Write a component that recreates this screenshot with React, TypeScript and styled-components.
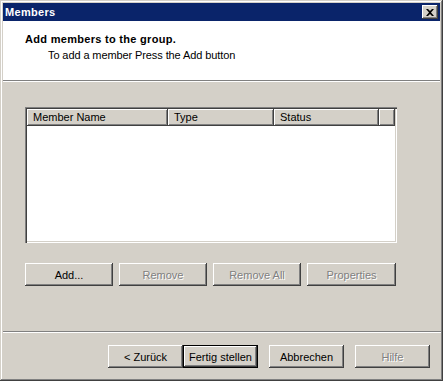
import React from "react";
import styled, { createGlobalStyle, css } from "styled-components";

const Global = createGlobalStyle`
  html, body { margin: 0; padding: 0; background: #d4d0c8; }
  body { font-family: Tahoma, "Liberation Sans", Arial, sans-serif; font-size: 11px; }
`;

const Window = styled.div`
  width: 443px;
  height: 381px;
  box-sizing: border-box;
  padding: 3px;
  background: #d4d0c8;
  box-shadow: inset -1px -1px #404040, inset 1px 1px #d4d0c8,
    inset -2px -2px #808080, inset 2px 2px #ffffff;
  display: flex;
  flex-direction: column;
`;

const TitleBar = styled.div`
  height: 18px;
  background: #0a246a;
  display: flex;
  align-items: center;
  justify-content: space-between;
  padding: 0 2px 0 2px;
`;

const Title = styled.span`
  color: #fff;
  font-weight: bold;
  font-size: 11px;
  letter-spacing: 0.3px;
`;

const CloseButton = styled.div`
  width: 16px;
  height: 14px;
  box-sizing: border-box;
  background: #d4d0c8;
  box-shadow: inset -1px -1px #404040, inset 1px 1px #ffffff,
    inset -2px -2px #808080, inset 2px 2px #d4d0c8;
  display: flex;
  align-items: center;
  justify-content: center;
`;

const Header = styled.div`
  height: 60px;
  background: #fff;
  box-sizing: border-box;
  padding: 10px 0 0 22px;
  border-bottom: 1px solid #808080;
  box-shadow: 0 1px 0 #ffffff;
  margin-bottom: 1px;
`;

const HeaderTitle = styled.div`
  font-weight: bold;
  font-size: 11px;
  line-height: 16px;
  letter-spacing: 0.3px;
  color: #000;
`;

const HeaderSub = styled.div`
  font-size: 11px;
  line-height: 16px;
  color: #000;
  padding-left: 23px;
  letter-spacing: -0.1px;
`;

const Body = styled.div`
  flex: 1;
  display: flex;
  flex-direction: column;
  padding: 25px 43px 0 22px;
`;

const ListView = styled.div`
  height: 136px;
  box-sizing: border-box;
  background: #fff;
  padding: 2px;
  box-shadow: inset 1px 1px #808080, inset 2px 2px #404040,
    inset -1px -1px #ffffff, inset -2px -2px #d4d0c8;
  display: flex;
  flex-direction: column;
`;

const HeaderRow = styled.div`
  display: flex;
  height: 17px;
  background: #d4d0c8;
`;

const ColHeader = styled.div<{ $w?: number }>`
  ${(p) =>
    p.$w
      ? css`
          width: ${p.$w}px;
        `
      : css`
          flex: 1;
        `}
  box-sizing: border-box;
  padding: 0 6px;
  line-height: 17px;
  font-size: 11px;
  color: #000;
  white-space: nowrap;
  overflow: hidden;
  box-shadow: inset -1px -1px #404040, inset 1px 1px #ffffff,
    inset -2px -2px #808080;
`;

const ButtonRow = styled.div<{ $gap: number }>`
  display: flex;
  gap: ${(p) => p.$gap}px;
  margin-top: 20px;
`;

const Btn = styled.button<{ $w: number; $default?: boolean }>`
  width: ${(p) => p.$w}px;
  height: 23px;
  box-sizing: border-box;
  margin: 0;
  padding: 0;
  border: none;
  background: #d4d0c8;
  font-family: Tahoma, "Liberation Sans", Arial, sans-serif;
  font-size: 11px;
  color: #000;
  box-shadow: ${(p) =>
    p.$default
      ? "inset 0 0 0 1px #000, inset -2px -2px #404040, inset 2px 2px #ffffff, inset -3px -3px #808080"
      : "inset -1px -1px #404040, inset 1px 1px #ffffff, inset -2px -2px #808080"};
  &:disabled {
    color: #808080;
    text-shadow: 1px 1px 0 #ffffff;
  }
`;

const Separator = styled.div`
  height: 1px;
  background: #808080;
  border-bottom: 1px solid #ffffff;
  margin: 0 -1px 0 0;
`;

const Footer = styled.div`
  display: flex;
  justify-content: flex-end;
  padding: 12px 10px 10px 0;
  gap: 11px;
`;

const Pair = styled.div`
  display: flex;
`;

export default function App() {
  return (
    <>
      <Global />
      <Window>
        <TitleBar>
          <Title>Members</Title>
          <CloseButton>
            <svg width="8" height="7" viewBox="0 0 8 7">
              <path d="M0 0h2l2 2 2-2h2L5 3.5 8 7H6L4 5 2 7H0l3-3.5z" fill="#000" />
            </svg>
          </CloseButton>
        </TitleBar>
        <Header>
          <HeaderTitle>Add members to the group.</HeaderTitle>
          <HeaderSub>To add a member Press the Add button</HeaderSub>
        </Header>
        <Body>
          <ListView>
            <HeaderRow>
              <ColHeader $w={141}>Member Name</ColHeader>
              <ColHeader $w={106}>Type</ColHeader>
              <ColHeader $w={105}>Status</ColHeader>
              <ColHeader />
            </HeaderRow>
          </ListView>
          <ButtonRow $gap={6}>
            <Btn $w={88}>Add...</Btn>
            <Btn $w={88} disabled>Remove</Btn>
            <Btn $w={88} disabled>Remove All</Btn>
            <Btn $w={89} disabled>Properties</Btn>
          </ButtonRow>
        </Body>
        <Separator />
        <Footer>
          <Pair>
            <Btn $w={75}>&lt; Zurück</Btn>
            <Btn $w={75} $default>Fertig stellen</Btn>
          </Pair>
          <Btn $w={75}>Abbrechen</Btn>
          <Btn $w={75} disabled>Hilfe</Btn>
        </Footer>
      </Window>
    </>
  );
}
